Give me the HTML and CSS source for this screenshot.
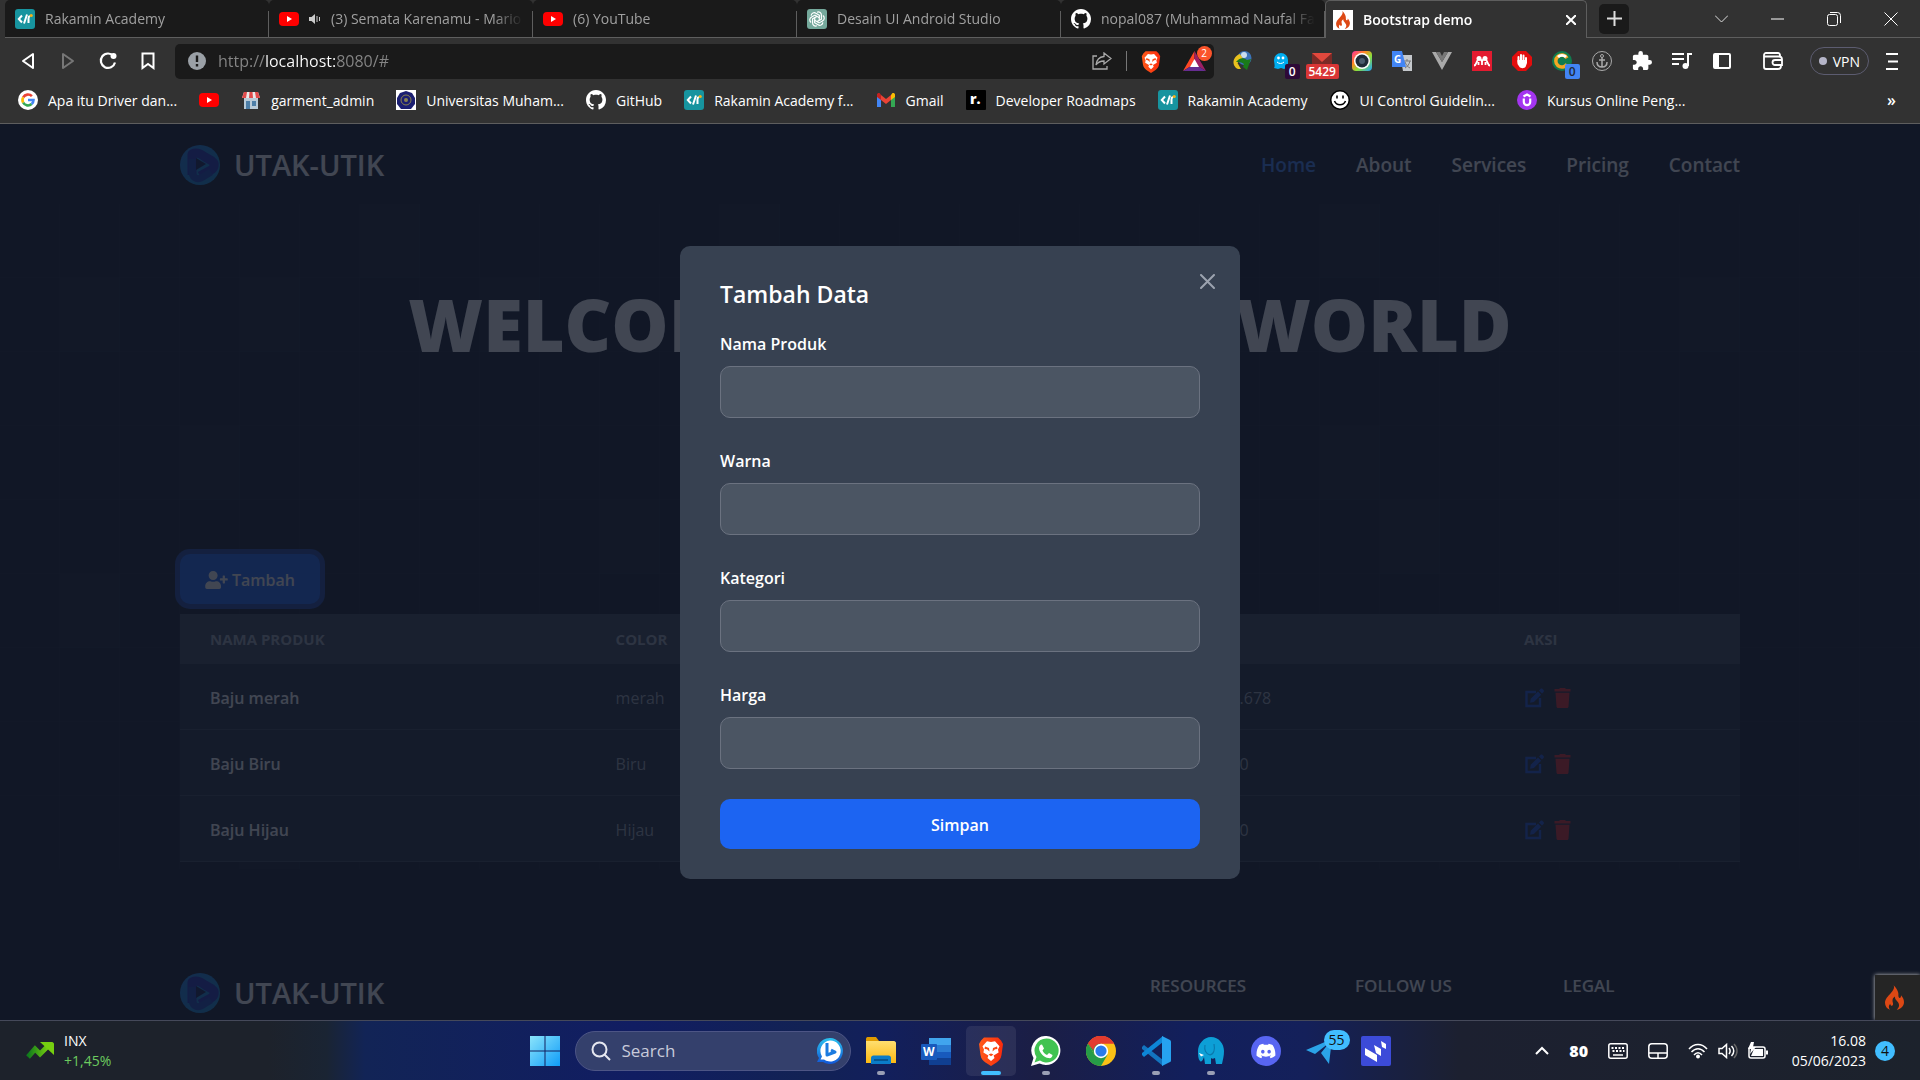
FILE: index.html
```html
<!DOCTYPE html>
<html lang="id">
<head>
<meta charset="utf-8">
<meta name="viewport" content="width=device-width, initial-scale=1">
<title>Bootstrap demo</title>
<link rel="stylesheet" href="styles.css">
</head>
<body>
<svg class="sprite" aria-hidden="true">
  <defs>
    <linearGradient id="g-start" x1="0" y1="0" x2="1" y2="1"><stop offset="0" stop-color="#8be4fb"/><stop offset="1" stop-color="#0f9cf8"/></linearGradient>
    <linearGradient id="g-cam" x1="0" y1="0" x2="1" y2="1"><stop offset="0" stop-color="#ff2fa0"/><stop offset=".35" stop-color="#ff8a1f"/><stop offset=".6" stop-color="#8ddf3a"/><stop offset="1" stop-color="#1fa0ff"/></linearGradient>
    <linearGradient id="g-brave" x1="0" y1="0" x2="1" y2="0"><stop offset="0" stop-color="#ff5a1a"/><stop offset="1" stop-color="#fb2b0c"/></linearGradient>
    <linearGradient id="g-folder" x1="0" y1="0" x2="0" y2="1"><stop offset="0" stop-color="#ffdf70"/><stop offset="1" stop-color="#fdb912"/></linearGradient>
    <linearGradient id="g-arrow" x1="0" y1="0" x2="1" y2="0"><stop offset="0" stop-color="#0f7a1c"/><stop offset="1" stop-color="#7bd30f"/></linearGradient>
    <linearGradient id="g-bing" x1="0" y1="0" x2="0" y2="1"><stop offset="0" stop-color="#2bc3f0"/><stop offset="1" stop-color="#1156d6"/></linearGradient>
    <linearGradient id="g-logo" x1="0" y1="0" x2="1" y2="1"><stop offset="0" stop-color="#1c7fe8"/><stop offset="1" stop-color="#0d8ad0"/></linearGradient>
    <symbol id="rakamin" viewBox="0 0 20 20"><rect width="20" height="20" rx="3" fill="#17949f"/><path d="M7 6.500L3.800 10 7 13.500M12 5.500l-3 9M13.500 14V9.500c0-1.500.5-2.300 1.500-2.500" fill="none" stroke="#fff" stroke-width="2"/><circle cx="16.200" cy="6.500" r="1.600" fill="#f6b21b"/></symbol>
    <symbol id="youtube" viewBox="0 0 20 20"><rect y="3" width="20" height="14" rx="4" fill="#f00"/><path d="M8 7l5 3-5 3z" fill="#fff"/></symbol>
    <symbol id="github" viewBox="0 0 16 16"><path fill="#fff" d="M8 0C3.580 0 0 3.580 0 8c0 3.540 2.290 6.530 5.470 7.590.4.07.55-.17.55-.38 0-.19-.01-.82-.01-1.490-2.010.37-2.530-.49-2.690-.94-.09-.23-.48-.94-.82-1.130-.28-.15-.68-.52-.01-.53.63-.01 1.080.58 1.230.82.72 1.210 1.870.87 2.330.66.07-.52.28-.87.51-1.070-1.780-.2-3.640-.89-3.640-3.950 0-.87.31-1.590.82-2.150-.08-.2-.36-1.020.08-2.120 0 0 .67-.21 2.200.82.64-.18 1.320-.27 2-.27s1.360.09 2 .27c1.530-1.040 2.200-.82 2.200-.82.44 1.100.16 1.920.08 2.120.51.56.82 1.270.82 2.150 0 3.070-1.870 3.750-3.650 3.950.29.25.54.73.54 1.480 0 1.070-.01 1.930-.01 2.200 0 .21.15.46.55.38A8.010 8.010 0 0 0 16 8c0-4.420-3.580-8-8-8z"/></symbol>
    <symbol id="openai" viewBox="0 0 20 20"><rect width="20" height="20" rx="3" fill="#75a99c"/><g fill="none" stroke="#fff" stroke-width="1.200"><path id="petal" d="M10 3.200c2.400-1 4.600.8 4.400 3v4L10 12.600"/><use href="#petal" transform="rotate(60 10 10)"/><use href="#petal" transform="rotate(120 10 10)"/><use href="#petal" transform="rotate(180 10 10)"/><use href="#petal" transform="rotate(240 10 10)"/><use href="#petal" transform="rotate(300 10 10)"/></g></symbol>
    <symbol id="flame" viewBox="0 0 20 26"><path d="M9 0c1.500 3-.5 5.500-3 8.500C3 12 0 14.500 0 18.500 0 22 2 24.800 5.500 26 3.500 24 3.600 21.500 5.500 19.500c.2 1.500.8 2 1.700 2.200C9 21.500 8.500 19 8 17.500 7.600 15 8.500 13 10.500 12c-.3 2.500 1 3.600 2.500 5.200 2.600 2.900 2.400 6-.7 8.800C17 25 20 21.700 20 17.700c0-3-1.400-5-3.200-7 .2 1.700-.3 2.600-1.300 2.800-1.800-.3-1.200-3-1.500-5.200C13.500 5 11.500 2.500 9 0z" fill="#dd4814"/></symbol>
    <symbol id="google" viewBox="0 0 20 20"><circle cx="10" cy="10" r="10" fill="#fff"/><g fill="none" stroke-width="2.600"><path d="M13.900 6.200A5.500 5.500 0 0 0 5.200 7.300" stroke="#ea4335"/><path d="M5.200 7.300a5.500 5.500 0 0 0 0 5.400" stroke="#fbbc05"/><path d="M5.200 12.700a5.500 5.500 0 0 0 8.400 1.400" stroke="#34a853"/><path d="M13.600 14.100A5.500 5.500 0 0 0 15.500 10H10" stroke="#4285f4"/></g></symbol>
    <symbol id="lion" viewBox="0 0 26 30"><path d="M6 1.500h14l3 3 2 3.500-1.500 11c-.5 4-3 6-5 7.500L13 30l-5.500-3.500c-2-1.500-4.500-3.500-5-7.500L1 8l2-3.500z" fill="url(#g-brave)"/><path d="M13 6l4-.8 4.500 5-1.500 3.300.6 3-5 3 .9 2.500L13 25l-3.500-3 .9-2.500-5-3 .6-3L4.500 10.200 9 5.200z" fill="#fff"/><path d="M7 10.500l4 1.500.5 3.500L9 13.300 6.500 13zM19 10.500l-4 1.500-.5 3.500 2.500-2.200 2.500-.3zM10.500 18.500l2.500-1 2.500 1-2.500 1.800z" fill="#fb4a15"/></symbol>
    <symbol id="logo" viewBox="0 0 40 40"><circle cx="20" cy="20" r="20" fill="url(#g-logo)"/><path d="M12 30V9c6-3 10 1 13 3l7 4c4 3 2 7-1 9l-11 6" fill="none" stroke="#1f2fb8" stroke-width="9" stroke-linejoin="round"/><path d="M12 14v12c0 6 4 9 9 7l10-6" fill="none" stroke="#1740b8" stroke-width="7"/><path d="M16 13l10 6-10 6z" fill="#101a4c"/></symbol>
    <symbol id="edit" viewBox="0 0 20 20"><path d="M11.500 4H2v14h13.500V10" fill="none" stroke="currentColor" stroke-width="2.400"/><path d="M5.600 14.800l.6-4 7.300-7.300 3.200 3.200-7.300 7.300zM14.500 2.500L16 1c.6-.6 1.400-.6 2 0l1 1c.6.6.6 1.400 0 2l-1.500 1.500z" fill="currentColor"/></symbol>
    <symbol id="trash" viewBox="0 0 16 20"><path d="M0 1h4.500l1-1h5l1 1H16v2.600H0zM1 4.800h14L14 18.500c0 .9-.6 1.500-1.500 1.500h-9c-.9 0-1.500-.6-1.500-1.500z" fill="currentColor"/></symbol>
  </defs>
</svg>

<header class="browser">
  <div class="tabs">
    <div class="tab"><svg class="fav"><use href="#rakamin"/></svg><span class="tab-title">Rakamin Academy</span></div>
    <div class="tab"><svg class="fav"><use href="#youtube"/></svg><svg class="sound" viewBox="0 0 12 12"><path d="M0 4h2.500L6 1v10L2.500 8H0z" fill="#ccc"/><path d="M8 3v6M10.500 4v4" stroke="#ccc"/></svg><span class="tab-title">(3) Semata Karenamu - Mario</span></div>
    <div class="tab"><svg class="fav"><use href="#youtube"/></svg><span class="tab-title">(6) YouTube</span></div>
    <div class="tab"><svg class="fav"><use href="#openai"/></svg><span class="tab-title">Desain UI Android Studio</span></div>
    <div class="tab"><svg class="fav"><use href="#github"/></svg><span class="tab-title">nopal087 (Muhammad Naufal Fa</span></div>
    <div class="tab tab-active"><span class="fav fav-white"><svg width="14" height="18"><use href="#flame"/></svg></span><span class="tab-title">Bootstrap demo</span><button class="tab-close" aria-label="Close tab"><svg width="10" height="10" viewBox="0 0 10 10"><path d="M0 0l10 10M10 0L0 10" stroke="#fff" stroke-width="2"/></svg></button></div>
    <div class="tab-rest">
      <button class="new-tab" aria-label="New tab"><svg width="15" height="15" viewBox="0 0 15 15"><path d="M7.500 0v15M0 7.500h15" stroke="#ddd" stroke-width="2"/></svg></button>
      <div class="window-buttons">
        <button aria-label="Search tabs"><svg width="13" height="8" viewBox="0 0 13 8"><path d="M0 .5l6.500 6.500L13 .5" fill="none" stroke="#ddd"/></svg></button>
        <button aria-label="Minimize"><svg width="13" height="2" viewBox="0 0 13 2"><path d="M0 1h13" stroke="#fff"/></svg></button>
        <button aria-label="Restore"><svg width="14" height="14" viewBox="0 0 14 14"><rect x=".5" y="2.500" width="10" height="11" rx="2" fill="none" stroke="#fff"/><path d="M3 .5h7.500a3 3 0 0 1 3 3V11" fill="none" stroke="#fff"/></svg></button>
        <button aria-label="Close"><svg width="14" height="14" viewBox="0 0 14 14"><path d="M.5.5l13 13M13.500.5l-13 13" stroke="#fff"/></svg></button>
      </div>
    </div>
  </div>

  <div class="toolbar">
    <div class="cells nav-cells">
      <button aria-label="Back"><svg width="14" height="18" viewBox="0 0 14 18"><path d="M12 2v14L2 9z" fill="none" stroke="#fff" stroke-width="2" stroke-linejoin="round"/></svg></button>
      <button aria-label="Forward"><svg width="14" height="18" viewBox="0 0 14 18"><path d="M2 2v14l10-7z" fill="none" stroke="#777" stroke-width="2" stroke-linejoin="round"/></svg></button>
      <button aria-label="Reload"><svg width="18" height="18" viewBox="0 0 18 18"><path d="M14.500 4A7.200 7.200 0 1 0 16 10.500" fill="none" stroke="#fff" stroke-width="2.200"/><circle cx="14.500" cy="4" r="3" fill="#fff"/></svg></button>
      <button aria-label="Bookmark"><svg width="14" height="18" viewBox="0 0 14 18"><path d="M1.500 1.500h11V16L7 12l-5.500 4z" fill="none" stroke="#fff" stroke-width="2"/></svg></button>
    </div>
    <div class="address">
      <svg width="18" height="18" viewBox="0 0 18 18"><circle cx="9" cy="9" r="9" fill="#9aa0a6"/><path d="M9 3.500v6.500M9 12v2.500" stroke="#1a1a1a" stroke-width="2.400"/></svg>
      <input class="url" type="text" aria-label="Address" value="http://localhost:8080/#">
      <svg class="share" width="20" height="18" viewBox="0 0 20 18"><path d="M5 4H1v13h14v-3M12 1l7 5.500-7 5.500V9c-4 0-6 1-8 4 .500-5 3-8 8-8.500z" fill="none" stroke="#aaa" stroke-width="1.300"/></svg>
      <span class="address-rule"></span>
      <svg width="20" height="23"><use href="#lion"/></svg>
      <span class="badged bat"><svg width="23" height="20" viewBox="0 0 23 20"><path d="M11.500 0L0 20l11.500-7z" fill="#ff4724"/><path d="M11.500 0L23 20l-11.500-7z" fill="#9e1f63"/><path d="M0 20h23l-11.500-7z" fill="#662d91"/><path d="M11.500 8L7 16h9z" fill="#fff"/></svg><span class="badge badge-round">2</span></span>
    </div>
    <div class="cells">
      <button aria-label="Download manager"><svg width="20" height="20" viewBox="0 0 20 20"><circle cx="12.500" cy="7" r="7" fill="#3b72b8"/><circle cx="12" cy="4" r="3" fill="#c9dcf0"/><path d="M8 3C2 5-1 12 4 17c2 1.500 5 1 5 1L5.500 12l5-5z" fill="#e9c11e"/><path d="M4 11c3-4 7-5 11-2l4-1-4 11-4-3 1-3c-3-2-5-2-8-2z" fill="#1a7a1a"/></svg></button>
      <button class="badged" aria-label="Ghostery"><svg width="20" height="20" viewBox="0 0 20 20"><path d="M2 9a7 7 0 0 1 14 0v5l3 3-4-.5-3 1.500-3-1-3 1-4-1c1.500-2 0-5 0-8z" fill="#00aef0"/><circle cx="6.500" cy="7" r="1.400" fill="#fff"/><circle cx="11" cy="7" r="1.400" fill="#fff"/><path d="M5 11c2 2 5 2 7 0" stroke="#fff" fill="none"/></svg><span class="badge badge-ink">0</span></button>
      <button class="badged" aria-label="Mail checker"><svg width="20" height="20" viewBox="0 0 20 20"><path d="M0 2h20v14H0z" fill="#7b2a26"/><path d="M0 2h20l-10 9z" fill="#e2483d"/></svg><span class="badge badge-red">5429</span></button>
      <button aria-label="Screen capture"><svg width="20" height="20" viewBox="0 0 20 20"><rect width="20" height="20" rx="4" fill="url(#g-cam)"/><circle cx="10" cy="10" r="8" fill="#fff"/><circle cx="10" cy="10" r="6.500" fill="#1f2b38"/><circle cx="10" cy="10" r="3" fill="#4a5b6d"/></svg></button>
      <button aria-label="Translate"><svg width="20" height="20" viewBox="0 0 20 20"><path d="M8 4h12v16h-9z" fill="#c5c8cc"/><path d="M12 10h7M15 8v2m3 0c-1 4-3 6-5 7m0-6c1 3 3 5 5 6" stroke="#777" fill="none"/><path d="M0 0h10l4 16H0z" fill="#4285f4"/><text x="2" y="12" font-size="10" font-weight="700" fill="#fff">G</text></svg></button>
      <button aria-label="Vue devtools"><svg width="20" height="18" viewBox="0 0 20 18"><path d="M0 0h4l6 10 6-10h4L10 18z" fill="#aaa"/><path d="M4 0h4l2 4 2-4h4l-6 10z" fill="#777"/></svg></button>
      <button aria-label="Mendeley"><svg width="20" height="20" viewBox="0 0 20 20"><path d="M0 0h20v20H0z" fill="#e31b30"/><circle cx="7" cy="7.500" r="2.500" fill="#fff"/><circle cx="13" cy="7.500" r="2.500" fill="#fff"/><path d="M2 14.500c2.500 0 2-4 4-5.500M10 14v-3c0-2-1-2.500-2-3M10 11c0-2 1-2.500 2-3M18 14.500c-2.500 0-2-4-4-5.500M6.500 11v3M13.500 11v3" fill="none" stroke="#fff" stroke-width="1.800"/></svg></button>
      <button aria-label="Ad blocker"><svg width="20" height="20" viewBox="0 0 20 20"><path d="M6 0h8l6 6v8l-6 6H6l-6-6V6z" fill="#e40d0d"/><path d="M6.500 11V6M9 10V4M11.500 10V4.500M14 11V7" stroke="#fff" stroke-width="2" stroke-linecap="round"/><path d="M5.500 9H15v3l-1.500 4c-1 1.500-5 1.500-6 0L5.500 13z" fill="#fff"/></svg></button>
      <button class="badged" aria-label="Clip saver"><svg width="20" height="20" viewBox="0 0 20 20"><circle cx="10" cy="10" r="10" fill="#107b4f"/><path d="M15 7a6 6 0 1 0 0 6" fill="none" stroke="#f5a623" stroke-width="3.500"/><path d="M14 6a6 6 0 0 0-8 0" fill="none" stroke="#fff" stroke-width="3"/></svg><span class="badge badge-blue">0</span></button>
      <button aria-label="Anchor"><svg width="20" height="20" viewBox="0 0 20 20"><g fill="none" stroke="#aaa"><circle cx="10" cy="10" r="9.500"/><circle cx="10" cy="5" r="1.500"/><path d="M10 6.500V16M7 9h6M5 11c0 3 2 5 5 5s5-2 5-5" stroke-width="1.500"/></g></svg></button>
      <button aria-label="Extensions"><svg width="20" height="20" viewBox="1 1 22 22"><path fill="#fff" d="M20.500 11H19V7c0-1.100-.9-2-2-2h-4V3.500a2.500 2.500 0 0 0-5 0V5H4c-1.100 0-2 .9-2 2v3.800h1.500c1.500 0 2.700 1.200 2.700 2.700S5 16.200 3.500 16.200H2V20c0 1.100.9 2 2 2h3.800v-1.500c0-1.500 1.200-2.700 2.700-2.700s2.700 1.200 2.700 2.700V22H17c1.100 0 2-.9 2-2v-4h1.500a2.500 2.500 0 0 0 0-5z"/></svg></button>
      <button aria-label="Playlist"><svg width="20" height="18" viewBox="0 0 20 18"><path d="M0 2h12M0 7h12M0 12h7" stroke="#fff" stroke-width="2"/><path d="M16 14V2h4" fill="none" stroke="#fff" stroke-width="2"/><circle cx="13.500" cy="14" r="3" fill="#fff"/></svg></button>
      <button aria-label="Sidebar"><svg width="18" height="16" viewBox="0 0 18 16"><rect x="1" y="1" width="16" height="14" rx="1" fill="none" stroke="#fff" stroke-width="2"/><path d="M1 1h5v14H1z" fill="#fff"/></svg></button>
    </div>
    <div class="toolbar-end">
      <button aria-label="Wallet"><svg width="20" height="18" viewBox="0 0 20 18"><path d="M17 5V3a2 2 0 0 0-2-2H3a2 2 0 0 0-2 2v12a2 2 0 0 0 2 2h12a3 3 0 0 0 3-3M1 4.500h15a3 3 0 0 1 3 3V13h-7a2.500 2.500 0 0 1 0-5h7" fill="none" stroke="#fff" stroke-width="1.800"/></svg></button>
      <button class="vpn"><span class="vpn-dot"></span>VPN</button>
      <button aria-label="Menu"><svg width="12" height="17" viewBox="0 0 12 17"><path d="M0 1h12M2 8.500h10M0 16h12" stroke="#fff" stroke-width="2"/></svg></button>
    </div>
  </div>

  <nav class="bookmarks" aria-label="Bookmarks">
    <a href="#"><svg class="fav"><use href="#google"/></svg>Apa itu Driver dan...</a>
    <a href="#" aria-label="YouTube"><svg class="fav"><use href="#youtube"/></svg></a>
    <a href="#"><svg class="fav" viewBox="0 0 20 20"><path d="M3 8h14v11H3z" fill="#b9cbd8"/><path d="M5 11h4v8H5zM11 11h4v5h-4z" fill="#4d7fa8"/><path d="M3 2h14l2 6H1z" fill="#e8e8e8"/><path d="M3 2h3L5 8H1zM8.500 2h3l.5 6H8zM14 2h3l2 6h-4z" fill="#e04b4b"/></svg>garment_admin</a>
    <a href="#"><svg class="fav" viewBox="0 0 20 20"><path d="M0 0h20v20H0z" fill="#fff"/><path d="M10 1l6 2 3 5v6l-4 5H5l-4-5V8l3-5z" fill="#1b1f72"/><circle cx="10" cy="10" r="5" fill="none" stroke="#8a8250" stroke-width="1"/><circle cx="10" cy="10" r="2" fill="#8a8250"/></svg>Universitas Muham...</a>
    <a href="#"><svg class="fav"><use href="#github"/></svg>GitHub</a>
    <a href="#"><svg class="fav"><use href="#rakamin"/></svg>Rakamin Academy f...</a>
    <a href="#"><svg class="fav" viewBox="0 0 20 20"><path d="M1 4v13h4V9z" fill="#4285f4"/><path d="M19 4v13h-4V9z" fill="#34a853"/><path d="M15 5v5l4-3V5c0-2-2-2.500-3-1.500z" fill="#fbbc04"/><path d="M5 5l5 4 5-4v5l-5 4-5-4z" fill="#ea4335"/><path d="M1 5v2l4 3V5L4 3.500C3 2.500 1 3 1 5z" fill="#c5221f"/></svg>Gmail</a>
    <a href="#"><svg class="fav" viewBox="0 0 20 20"><rect width="20" height="20" rx="1" fill="#000"/><text x="4" y="14" font-size="14" font-weight="800" fill="#fff">r.</text></svg>Developer Roadmaps</a>
    <a href="#"><svg class="fav"><use href="#rakamin"/></svg>Rakamin Academy</a>
    <a href="#"><svg class="fav" viewBox="0 0 20 20"><circle cx="10" cy="10" r="10" fill="#000"/><circle cx="10" cy="10" r="8.500" fill="#fff"/><path d="M7 5.500v3M13 5.500v3M4.500 11c2 5 9 5 11 0" stroke="#000" stroke-width="1.600" fill="none"/></svg>UI Control Guidelin...</a>
    <a href="#"><svg class="fav" viewBox="0 0 20 20"><circle cx="10" cy="10" r="10" fill="#a435f0"/><path d="M6.800 8.500V12a3.200 3.200 0 0 0 6.400 0V8.500M6.500 6.500L10 4.500l3.500 2" fill="none" stroke="#fff" stroke-width="2.200"/></svg>Kursus Online Peng...</a>
    <button class="more" aria-label="More bookmarks">»</button>
  </nav>
</header>

<main class="viewport">
  <div class="site">
    <svg class="pattern" width="100%" height="665" aria-hidden="true">
      <defs><pattern id="grid" width="60" height="74" patternUnits="userSpaceOnUse"><path d="M59.500 0v74M0 73.500h60" stroke="#1f2937" stroke-opacity=".25" fill="none"/></pattern></defs>
      <rect width="100%" height="100%" fill="url(#grid)"/>
      <path fill="#1f2937" fill-opacity=".3" d="M360 0h60v74h-60zM240 74h60v74h-60zM480 74h60v74h-60zM720 0h60v74h-60zM1320 0h60v74h-60zM1680 74h60v74h-60zM180 222h60v74h-60zM60 74h60v74H60zM1380 296h60v74h-60zM1320 222h60v74h-60zM600 296h60v74h-60zM60 370h60v74H60zM240 591h60v74h-60z"/>
    </svg>
    <div class="container">
      <header class="site-header">
        <a class="brand" href="#"><svg width="40" height="40"><use href="#logo"/></svg>UTAK-UTIK</a>
        <nav class="site-nav" aria-label="Main"><a class="current" href="#">Home</a><a href="#">About</a><a href="#">Services</a><a href="#">Pricing</a><a href="#">Contact</a></nav>
      </header>
      <h1>WELCOME TO MARKET WORLD</h1>
      <button class="add"><svg width="23" height="18" viewBox="0 0 640 512"><path fill="#fff" d="M624 208h-64v-64c0-8.800-7.200-16-16-16h-32c-8.800 0-16 7.200-16 16v64h-64c-8.800 0-16 7.200-16 16v32c0 8.800 7.200 16 16 16h64v64c0 8.800 7.200 16 16 16h32c8.800 0 16-7.200 16-16v-64h64c8.800 0 16-7.200 16-16v-32c0-8.800-7.200-16-16-16zm-400 48c70.700 0 128-57.300 128-128S294.700 0 224 0 96 57.300 96 128s57.300 128 128 128zm89.600 32h-16.700c-22.200 10.200-46.900 16-72.900 16s-50.600-5.800-72.900-16h-16.700C60.200 288 0 348.200 0 422.400V464c0 26.500 21.500 48 48 48h352c26.500 0 48-21.500 48-48v-41.600c0-74.200-60.200-134.400-134.400-134.400z"/></svg>Tambah</button>
      <table class="products">
        <thead><tr><th class="c-name" scope="col">Nama Produk</th><th class="c-color" scope="col">Color</th><th class="c-category" scope="col">Kategori</th><th scope="col">Harga</th><th class="c-actions" scope="col">Aksi</th></tr></thead>
        <tbody>
          <tr><th scope="row">Baju merah</th><td>merah</td><td>Baju</td><td>Rp. 12.345.678</td><td><span class="actions"><a class="edit" href="#" aria-label="Edit"><svg width="21" height="20"><use href="#edit"/></svg></a><a class="delete" href="#" aria-label="Hapus"><svg width="17" height="20"><use href="#trash"/></svg></a></span></td></tr>
          <tr><th scope="row">Baju Biru</th><td>Biru</td><td>Baju</td><td>Rp. 200.000</td><td><span class="actions"><a class="edit" href="#" aria-label="Edit"><svg width="21" height="20"><use href="#edit"/></svg></a><a class="delete" href="#" aria-label="Hapus"><svg width="17" height="20"><use href="#trash"/></svg></a></span></td></tr>
          <tr><th scope="row">Baju Hijau</th><td>Hijau</td><td>Baju</td><td>Rp. 200.000</td><td><span class="actions"><a class="edit" href="#" aria-label="Edit"><svg width="21" height="20"><use href="#edit"/></svg></a><a class="delete" href="#" aria-label="Hapus"><svg width="17" height="20"><use href="#trash"/></svg></a></span></td></tr>
        </tbody>
      </table>
      <footer class="site-footer">
        <a class="brand" href="#"><svg width="40" height="40"><use href="#logo"/></svg>UTAK-UTIK</a>
        <div class="footer-heads"><h2>RESOURCES</h2><h2>FOLLOW US</h2><h2>LEGAL</h2></div>
      </footer>
    </div>
  </div>
  <div class="backdrop">
    <form class="modal" role="dialog" aria-labelledby="modal-title">
      <button class="modal-close" type="button" aria-label="Tutup"><svg width="15" height="15" viewBox="0 0 15 15"><path d="M1 1l13 13M14 1L1 14" stroke="#9ca3af" stroke-width="2" stroke-linecap="round"/></svg></button>
      <h3 id="modal-title">Tambah Data</h3>
      <div class="field"><label for="nama">Nama Produk</label><input id="nama" type="text"></div>
      <div class="field"><label for="warna">Warna</label><input id="warna" type="text"></div>
      <div class="field"><label for="kategori">Kategori</label><input id="kategori" type="text"></div>
      <div class="field"><label for="harga">Harga</label><input id="harga" type="text"></div>
      <button class="save" type="submit">Simpan</button>
    </form>
  </div>
  <button class="debug" aria-label="Debug toolbar"><svg width="19" height="25"><use href="#flame"/></svg></button>
</main>

<footer class="taskbar">
  <div class="widget"><svg width="28" height="20" viewBox="0 0 28 20"><path d="M2 16l7-8 5 5 9-9" fill="none" stroke="url(#g-arrow)" stroke-width="5"/><path d="M14 1h12c1 0 2 1 2 2v11z" fill="#76cf10"/></svg><div class="lines"><span>INX</span><span class="up">+1,45%</span></div></div>
  <div class="apps">
    <button class="app" aria-label="Start"><svg width="30" height="30" viewBox="0 0 30 30"><path d="M0 0h14.500v14.500H0zM15.500 0H30v14.500H15.500zM0 15.500h14.500V30H0zM15.500 15.500H30V30H15.500z" fill="url(#g-start)"/></svg></button>
    <div class="search"><svg width="20" height="20" viewBox="0 0 20 20"><circle cx="8.500" cy="8.500" r="7" fill="none" stroke="#e5e7f0" stroke-width="2"/><path d="M13.500 13.500L19 19" stroke="#e5e7f0" stroke-width="2"/></svg><input type="text" aria-label="Search" placeholder="Search"><svg width="26" height="26" viewBox="0 0 26 26"><path d="M13 0a13 13 0 1 1-7 24H0l2-4A13 13 0 0 1 13 0z" fill="url(#g-bing)"/><path d="M13 2.500a10.500 10.500 0 1 1-6 19H3.500l1.500-3a10.500 10.500 0 0 1 8-16z" fill="#fff"/><path d="M10 5v12l8-3-4-2" fill="none" stroke="#1b7be0" stroke-width="3" stroke-linejoin="round"/></svg></div>
    <button class="app running" aria-label="File Explorer"><svg width="30" height="30" viewBox="0 0 30 30"><path d="M0 3c0-1 .5-2 1.500-2H10l3 4v5H0z" fill="#e09b00"/><path d="M0 5h28c1 0 2 1 2 2v20H0z" fill="url(#g-folder)"/><path d="M5 28v-6c0-1.500 1-2.500 2.500-2.500h15c1.500 0 2.500 1 2.500 2.500v6z" fill="#0b7cc8"/><path d="M8 24h14" stroke="#064a80" stroke-width="1.500"/></svg></button>
    <button class="app" aria-label="Word"><svg width="30" height="30" viewBox="0 0 30 30"><path d="M8 2h22v7H8z" fill="#41a5ee"/><path d="M8 9h22v7H8z" fill="#2b7cd3"/><path d="M8 16h22v6H8z" fill="#185abd"/><path d="M8 22h22v7H8z" fill="#103f91"/><rect y="8" width="16" height="16" rx="1" fill="#185abd"/><text x="2" y="20" font-size="12" font-weight="700" fill="#fff">W</text></svg></button>
    <button class="app active" aria-label="Brave"><svg width="26" height="30"><use href="#lion"/></svg></button>
    <button class="app running" aria-label="WhatsApp"><svg width="30" height="30" viewBox="0 0 30 30"><path d="M15.500 0a14.500 14.500 0 1 1-7 27.500L0 30l2.500-8A14.500 14.500 0 0 1 15.500 0z" fill="#fff"/><path d="M15.500 2.500a12 12 0 1 1-6.500 22l-5.500 2 2-5.500a12 12 0 0 1 10-18.500z" fill="#40c351"/><path d="M11 8.500l2 4-1.500 2c1 2 2.500 3.500 4.500 4.500l2-2 3.500 2c0 2.500-2 3.500-4 3C13 21.500 8.500 17 8 12.500c0-2 1-4 3-4z" fill="#fff"/></svg></button>
    <button class="app" aria-label="Chrome"><svg width="30" height="30" viewBox="0 0 30 30"><circle cx="15" cy="15" r="15" fill="#fbc116"/><path d="M15 15L2 7.500A15 15 0 0 1 28 7.500H15z" fill="#e33b2e"/><path d="M2 7.500A15 15 0 0 0 15 30l6.500-11.300L15 15 8.500 18.700z" fill="#269c47"/><path d="M2 7.500L8.500 18.700 15 7.500z" fill="#269c47"/><path d="M2 7.500A15 15 0 0 1 28 7.500H15c-4 0-7 3-7.500 7z" fill="#e33b2e"/><circle cx="15" cy="15" r="7.200" fill="#fff"/><circle cx="15" cy="15" r="5.600" fill="#2a7bea"/></svg></button>
    <button class="app running" aria-label="Visual Studio Code"><svg width="30" height="30" viewBox="0 0 30 30"><path d="M1 11l2-2 19 15v6L1 13z" fill="#1374bf"/><path d="M1 19l2 2L22 6V0L1 17z" fill="#0d86d7"/><path d="M21 0l8 4c.6.400 1 1 1 1.500v19c0 .5-.4 1.100-1 1.500l-8 4z" fill="#26a2f0"/></svg></button>
    <button class="app running" aria-label="Laragon"><svg width="30" height="30" viewBox="0 0 30 30"><path d="M2 15C2 8 8 1 15 1c8 0 13 7 13 14 0 5-1 8-2 13h-6l-1-6c-2 1-3 1-4 0v6H9l-1-7c-1 2-2 6-4 4s-2-6-2-10z" fill="#0d9fd6"/><path d="M9 9c-1 5 1 9 5 10 4-1 5-6 4-11" fill="none" stroke="#0a78ad" stroke-width="1.200"/><path d="M3 17l5 2-3 1.500z" fill="#fff"/></svg></button>
    <button class="app" aria-label="Discord"><svg width="30" height="30" viewBox="0 0 30 30"><circle cx="15" cy="15" r="15" fill="#5865f2"/><path transform="translate(5.500 5.500) scale(.79)" fill="#fff" d="M20.300 4.400a19.800 19.800 0 0 0-4.900-1.500c-.2.400-.5.900-.7 1.300a18.300 18.300 0 0 0-5.500 0c-.2-.4-.4-.9-.6-1.300A19.700 19.700 0 0 0 3.700 4.400C.5 9-.3 13.600.1 18.100a19.900 19.900 0 0 0 6 3c.5-.6.900-1.300 1.300-2-.7-.3-1.300-.6-1.900-1l.4-.3c3.900 1.800 8.200 1.800 12.100 0l.4.300c-.6.400-1.200.7-1.900 1 .4.700.8 1.400 1.300 2a19.800 19.800 0 0 0 6-3c.5-5.200-.8-9.700-3.500-13.700zM8 15.300c-1.200 0-2.200-1.100-2.200-2.400s1-2.400 2.200-2.400 2.200 1.100 2.200 2.400-1 2.400-2.200 2.400zm8 0c-1.200 0-2.200-1.100-2.200-2.400s1-2.400 2.200-2.400 2.200 1.100 2.200 2.400-1 2.400-2.200 2.400z"/></svg></button>
    <button class="app badged" aria-label="Telegram"><svg width="30" height="30" viewBox="0 0 30 30"><path d="M0 14L26 3l-3 25-8-11 8-10L9 18z" fill="#2ba3e8"/></svg><span class="count">55</span></button>
    <button class="app" aria-label="Notes"><svg width="30" height="30" viewBox="0 0 30 30"><rect width="30" height="30" rx="2" fill="#3c4bd8"/><path d="M4 12l12 7v7L4 19zM13 9l7 4v7l-5-3zM20 5l5 3v5l-4-2z" fill="#fff"/></svg></button>
  </div>
  <div class="tray">
    <svg width="14" height="9" viewBox="0 0 14 9"><path d="M1 8l6-6 6 6" fill="none" stroke="#fff" stroke-width="2"/></svg>
    <span class="temp">80</span>
    <svg width="20" height="16" viewBox="0 0 20 16"><rect x=".8" y=".8" width="18.400" height="14.400" rx="2" fill="none" stroke="#fff" stroke-width="1.500"/><path d="M3.500 5h13M4.500 8h12" stroke="#fff" stroke-width="2" stroke-dasharray="2 1.500"/><path d="M5 12h10" stroke="#fff" stroke-width="1.500"/></svg>
    <svg width="20" height="16" viewBox="0 0 20 16"><rect x=".8" y=".8" width="18.400" height="14.400" rx="3" fill="none" stroke="#fff" stroke-width="1.500"/><path d="M1 10h18M10 10v5" stroke="#fff" stroke-width="1.500"/></svg>
    <div class="status">
      <svg width="20" height="16" viewBox="0 0 20 16"><g fill="none" stroke="#fff" stroke-width="1.500"><path d="M1 6c5-6 13-6 18 0M3.500 9c4-4.500 9-4.500 13 0M6 12c2.500-3 5.500-3 8 0"/></g><circle cx="10" cy="13.500" r="2" fill="#fff"/></svg>
      <svg width="20" height="16" viewBox="0 0 20 16"><path d="M1 5.500h3L8.500 1.500v13L4 10.500H1zM11 5c1.500 2 1.500 4 0 6M13.500 3c3 3 3 7 0 10" fill="none" stroke="#fff" stroke-width="1.500"/><path d="M16 1c4 4 4 10 0 14" fill="none" stroke="#666" stroke-width="1.500"/></svg>
      <svg width="20" height="18" viewBox="0 0 20 18"><rect x="1" y="5" width="16" height="11" rx="2" fill="none" stroke="#fff" stroke-width="1.500"/><path d="M6 7h9v7H3zM18 8.500h2v4h-2zM3 0L0 7h3l-1 5 6-7H5l1-5z" fill="#fff"/></svg>
    </div>
    <div class="clock"><span>16.08</span><span>05/06/2023</span></div>
    <span class="notice">4</span>
  </div>
</footer>
</body>
</html>
```
FILE: styles.css
```css
* { box-sizing: border-box; }
html, body { height: 100%; }
body {
  margin: 0;
  display: flex;
  flex-direction: column;
  background: #111827;
  color: #fff;
  font-family: "Open Sans", "Noto Sans", sans-serif;
  font-size: 14px;
  overflow: hidden;
}
button, input { font: inherit; color: inherit; border: 0; background: none; padding: 0; margin: 0; }
a { color: inherit; text-decoration: none; }
svg { display: block; flex: none; }
.sprite { position: absolute; width: 0; height: 0; }
.fav { width: 20px; height: 20px; flex: none; }

/* Browser frame */
.browser { flex: none; background: #323232; border-bottom: 1px solid #5e5e5e; }
.tabs { display: flex; height: 38px; padding-left: 5px; }
.tab {
  flex: 0 1 264px;
  min-width: 0;
  display: flex;
  align-items: center;
  gap: 10px;
  padding: 0 10px;
  background: linear-gradient(#5e5e5e, #5e5e5e) right 11px / 1px 100% no-repeat #1a1a1a;
  border-bottom: 1px solid #5e5e5e;
  border-radius: 5px 5px 0 0;
  color: #a0a0a0;
}
.tab-title {
  flex: 1;
  min-width: 0;
  overflow: hidden;
  white-space: nowrap;
  mask-image: linear-gradient(to right, #000 calc(100% - 30px), transparent);
}
.sound { width: 12px; height: 12px; }
.tab-active {
  flex-basis: 262px;
  padding: 0 10px 0 7px;
  background: #323232;
  border: 1px solid #5e5e5e;
  border-bottom: 0;
  color: #fff;
  font-weight: 600;
}
.fav-white { display: flex; align-items: center; justify-content: center; background: #fff; }
.tab-rest { flex: 1; display: flex; align-items: center; padding: 0 22px 0 12px; border-bottom: 1px solid #5e5e5e; }
.new-tab { display: grid; place-items: center; width: 30px; height: 30px; border-radius: 5px; background: #1a1a1a; }
.window-buttons { margin-left: auto; display: flex; gap: 43px; align-items: center; }

.toolbar { display: flex; align-items: center; height: 46px; padding: 0 22px 0 8px; }
.cells { display: flex; }
.cells > * { width: 40px; height: 36px; display: grid; place-items: center; }
.nav-cells { margin-right: 7px; }
.address {
  flex: 1;
  display: flex;
  align-items: center;
  height: 35px;
  margin-right: 8px;
  padding: 0 8px 0 13px;
  border-radius: 5px;
  background: #1a1a1a;
}
.url {
  flex: 1;
  min-width: 0;
  margin-left: 12px;
  font-size: 16px;
  color: transparent;
  background: linear-gradient(to right, #868686 48px, #fff 48px 117px, #868686 117px);
  background-clip: text;
  outline: 0;
}
.address-rule { width: 1px; height: 20px; margin: 0 14px; background: #777; }
.badged { position: relative; }
.bat { margin-left: 22px; }
.badge { position: absolute; font-size: 12px; line-height: 15px; text-align: center; }
.badge-round { right: -6px; top: -5px; width: 15px; border-radius: 50%; background: #fb542b; font-size: 10px; }
.badge-ink, .badge-blue, .badge-red { bottom: 0; border-radius: 2px; font-weight: 600; }
.badge-ink { right: 2px; width: 15px; background: #2d0a38; }
.badge-blue { right: 2px; width: 15px; background: #4285f4; color: #1f2937; }
.badge-red { left: 4px; width: 33px; background: #d93636; }
.toolbar-end { display: flex; align-items: center; gap: 17px; margin-left: 21px; }
.vpn { display: flex; align-items: center; gap: 6px; margin-left: 10px; padding: 0 8px; height: 28px; border: 1px solid #5c5c70; border-radius: 14px; }
.vpn-dot { width: 8px; height: 8px; border-radius: 50%; background: #b5b5c8; }

.bookmarks { display: flex; align-items: center; gap: 22px; height: 39px; padding: 0 24px 7px 18px; white-space: nowrap; }
.bookmarks a { display: flex; align-items: center; gap: 10px; }
.more { margin-left: auto; font-weight: 600; font-size: 16px; }

/* Site */
.viewport { flex: 1; min-height: 0; position: relative; overflow: hidden; }
.site { position: relative; height: 100%; }
.pattern { position: absolute; left: 0; top: 80px; }
.container { position: relative; max-width: 1600px; margin: 0 auto; padding: 0 20px; }
.site-header { display: flex; justify-content: space-between; align-items: center; height: 80px; padding-top: 2px; }
.brand { display: flex; align-items: center; gap: 14px; font-size: 29px; font-weight: 600; line-height: 40px; }
.site-nav { display: flex; gap: 40px; font-size: 19px; font-weight: 600; }
.current { color: #3f83f8; }
h1 { margin: 80px 0 190px; font-size: 72px; line-height: 80px; font-weight: 800; text-align: center; white-space: nowrap; }
.add {
  display: flex;
  align-items: center;
  gap: 4px;
  height: 50px;
  padding: 2px 25px 0;
  border-radius: 10px;
  background: #1c64f2;
  box-shadow: 0 0 0 5px #1e429f;
  font-size: 16px;
  font-weight: 600;
}
.products { width: 100%; margin-top: 10px; border-collapse: separate; border-spacing: 0; table-layout: fixed; text-align: left; color: #9ca3af; font-size: 16px; }
.products th, .products td { padding: 0 30px; }
.products thead th { height: 50px; background: #374151; font-size: 15px; font-weight: 700; text-transform: uppercase; }
.products tbody th, .products tbody td { height: 66px; padding-top: 2px; background: #1f2937; border-bottom: 1px solid #374151; }
.products tbody th { color: #fff; font-weight: 600; }
.c-name { width: 26%; }
.c-color { width: 18%; }
.c-category { width: 17%; }
.products .c-actions { width: 246px; }
.actions { display: flex; gap: 9px; }
.edit { color: #1c4fd8; }
.delete { color: #e02424; }
.site-footer { display: flex; justify-content: space-between; margin-top: 111px; }
.footer-heads { display: grid; grid-template-columns: 205px 208px 177px; }
h2 { margin: 0; font-size: 17px; line-height: 26px; font-weight: 600; }

/* Dialog */
.backdrop {
  position: absolute;
  inset: 0;
  display: flex;
  justify-content: center;
  align-items: flex-start;
  padding-top: 122px;
  background: rgba(17, 24, 39, .8);
}
.modal { position: relative; width: 560px; padding: 30px 40px; border-radius: 10px; background: #374151; }
.modal-close { position: absolute; top: 28px; right: 25px; }
h3 { margin: 0 0 18px; font-size: 23px; line-height: 37px; font-weight: 600; }
.field { display: flex; flex-direction: column; gap: 8px; margin-bottom: 30px; }
.field label { font-size: 16px; line-height: 27px; font-weight: 600; }
.field input { height: 52px; padding: 0 12px; border: 1px solid #6b7280; border-radius: 10px; background: #4b5563; }
.save { width: 100%; height: 50px; padding-top: 2px; border-radius: 10px; background: #1c64f2; font-size: 16px; font-weight: 600; }
.debug { position: absolute; right: 0; bottom: 0; display: grid; justify-content: start; align-items: center; width: 45px; height: 45px; padding-left: 10px; background: #252525; box-shadow: 0 0 4px #ccc; }

/* Taskbar */
.taskbar {
  flex: none;
  display: grid;
  grid-template-columns: 1fr auto 1fr;
  align-items: center;
  height: 60px;
  border-top: 1px solid #45495a;
  background: linear-gradient(to right, #1d222b 0 14%, #1a2433 17%, #122456 19%, #111d62 33%, #122254 42%, #121f5c 46%, #1b1e45 54%, #121f5c 62%, #14205a 68%, #1c2030 76%, #1c222c);
}
.widget { display: flex; align-items: center; gap: 10px; padding-left: 26px; }
.lines, .clock { display: flex; flex-direction: column; line-height: 20px; }
.up { color: #6ccb5f; }
.apps { display: flex; align-items: center; gap: 5px; }
.app { position: relative; display: grid; place-items: center; width: 50px; height: 50px; border-radius: 5px; }
.app.active { background: rgba(255, 255, 255, .08); }
.app.running::after, .app.active::after { content: ""; position: absolute; bottom: 1px; left: 21px; width: 8px; height: 4px; border-radius: 2px; background: #9a9fb5; }
.app.active::after { left: 15px; width: 20px; background: #41bdff; }
.count { position: absolute; left: 28px; top: 4px; width: 26px; height: 20px; border-radius: 10px; background: #41bdff; color: #111; line-height: 20px; }
.search { display: flex; align-items: center; gap: 11px; width: 276px; height: 40px; padding: 0 7px 0 15px; border: 1px solid #4d5585; border-radius: 20px; background: #34406c; }
.search input { flex: 1; min-width: 0; font-size: 17px; }
.search input::placeholder { color: #c8cbda; opacity: 1; }
.tray { display: flex; align-items: center; justify-content: flex-end; gap: 20px; padding-right: 25px; }
.temp { font-size: 16px; font-weight: 800; }
.status { display: flex; align-items: center; gap: 10px; }
.clock { width: 78px; text-align: right; }
.notice { width: 20px; height: 20px; margin-left: -11px; border-radius: 50%; background: #41bdff; color: #111; line-height: 20px; text-align: center; }
```
